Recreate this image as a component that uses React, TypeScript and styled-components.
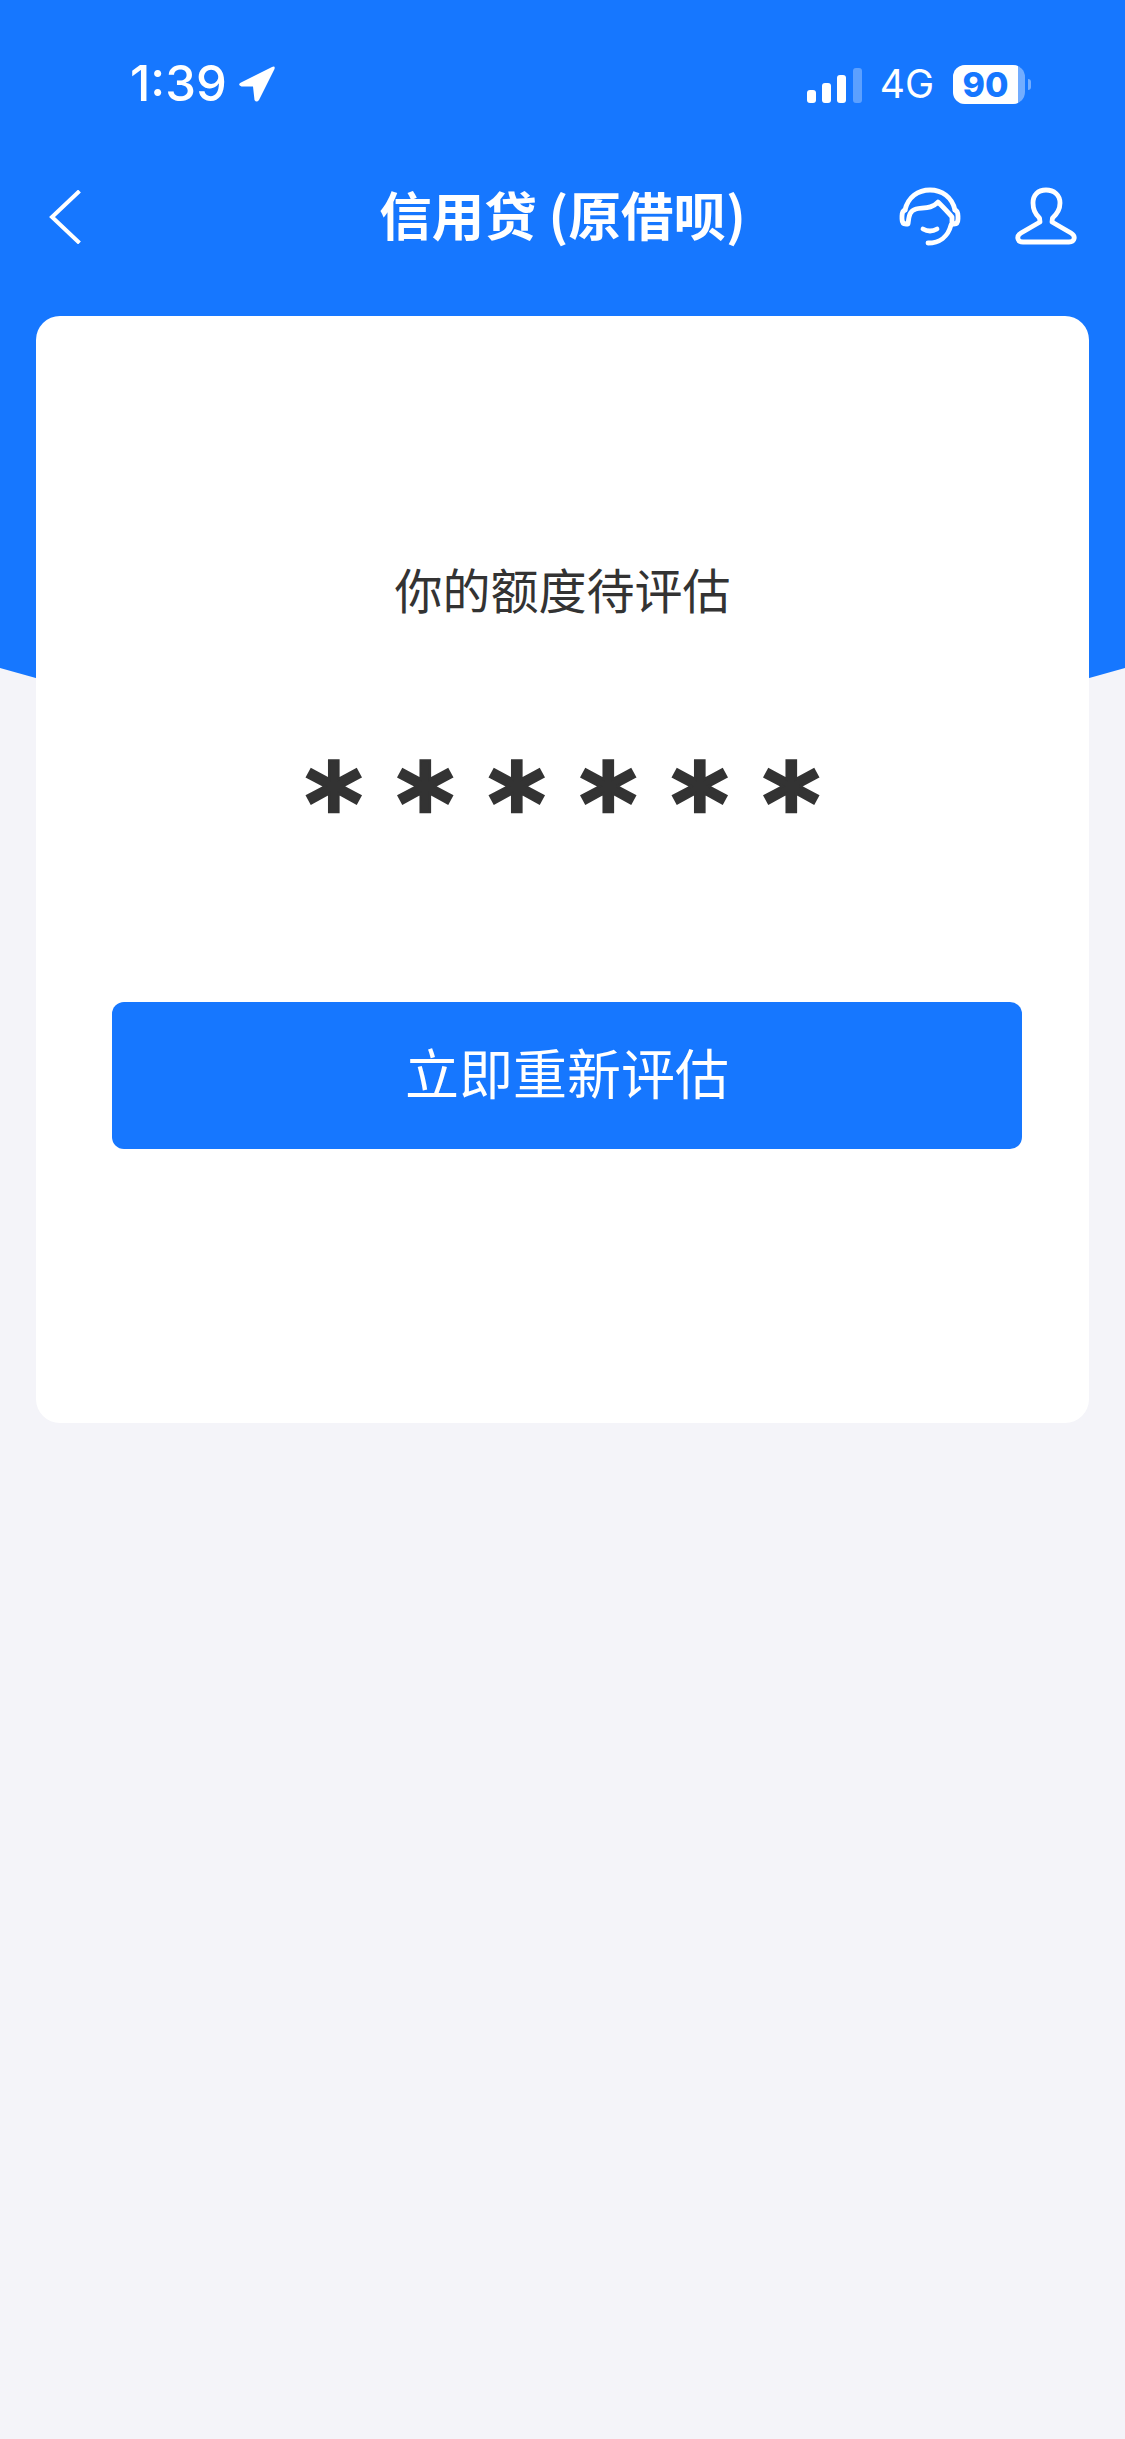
import styled, { createGlobalStyle } from "styled-components";

const BLUE = "#1677ff";

const GlobalStyle = createGlobalStyle`
  html, body {
    margin: 0;
    padding: 0;
    background: #f4f4f9;
  }
  * {
    box-sizing: border-box;
  }
`;

const Page = styled.div`
  position: relative;
  width: 1125px;
  height: 2439px;
  overflow: hidden;
  background: #f4f4f9;
  font-family: "Noto Sans CJK SC", "Noto Sans", sans-serif;
`;

const HeaderBackdrop = styled.div`
  position: absolute;
  top: 0;
  left: 0;
  width: 100%;
  height: 830px;
  background: ${BLUE};
  clip-path: polygon(0 0, 100% 0, 100% 668px, 50% 825px, 0 668px);
`;

const Content = styled.div`
  position: relative;
  display: flex;
  flex-direction: column;
`;

const StatusBar = styled.div`
  display: flex;
  justify-content: space-between;
  align-items: center;
  height: 40px;
  margin-top: 64px;
  padding: 0 94px 0 130px;
  color: #fff;
`;

const StatusLeft = styled.div`
  display: flex;
  align-items: center;
  gap: 11px;
`;

const Time = styled.span`
  font-family: Inter, sans-serif;
  font-size: 49px;
  font-weight: 500;
  line-height: 40px;
`;

const StatusRight = styled.div`
  display: flex;
  align-items: center;
`;

const Signal = styled.div`
  display: flex;
  align-items: flex-end;
  gap: 6.3px;
  height: 35px;
  margin-top: 2px;
`;

const SignalBar = styled.span<{ $h: number; $off?: boolean }>`
  display: block;
  width: 9px;
  height: ${(p) => p.$h}px;
  border-radius: 3px;
  background: ${(p) => (p.$off ? "rgba(255, 255, 255, 0.3)" : "#fff")};
`;

const Network = styled.span`
  margin-left: 18px;
  font-family: Inter, sans-serif;
  font-size: 39px;
  font-weight: 400;
  line-height: 40px;
`;

const Battery = styled.div`
  position: relative;
  width: 72px;
  height: 39px;
  margin-left: 19px;
  border-radius: 12px;
  overflow: hidden;
  background: rgba(255, 255, 255, 0.4);
  display: flex;
`;

const BatteryFill = styled.div`
  flex: none;
  width: 65px;
  height: 100%;
  background: #fff;
  display: flex;
  justify-content: center;
  align-items: center;
  color: ${BLUE};
  font-family: Inter, sans-serif;
  font-size: 34px;
  font-weight: 800;
`;

const BatteryTip = styled.span`
  width: 3px;
  height: 11px;
  margin-left: 3px;
  border-radius: 0 3px 3px 0;
  background: rgba(255, 255, 255, 0.4);
`;

const NavBar = styled.div`
  position: relative;
  display: flex;
  align-items: center;
  height: 60px;
  margin-top: 83px;
  padding: 0 50px 0 49px;
  color: #fff;
`;

const BackIcon = styled.svg`
  display: block;
  width: 32px;
  height: 54px;
  fill: none;
  stroke: #fff;
  stroke-width: 4;
`;

const Title = styled.h1`
  position: absolute;
  left: 0;
  right: 0;
  top: 0;
  margin: 0;
  text-align: center;
  font-size: 52.5px;
  font-weight: 700;
  line-height: 52px;
`;

const NavActions = styled.div`
  display: flex;
  align-items: center;
  gap: 55px;
  margin-left: auto;
`;

const NavIcon = styled.svg`
  display: block;
  width: 80px;
  height: 70px;
  margin: -4px -10px 0;
  fill: none;
  stroke: #fff;
  stroke-width: 4.8;
  stroke-linecap: round;
  stroke-linejoin: round;
`;

const Card = styled.section`
  display: flex;
  flex-direction: column;
  align-items: center;
  width: 1053px;
  height: 1107px;
  margin: 69px 0 0 36px;
  padding-top: 237px;
  border-radius: 24px;
  background: #fff;
`;

const QuotaLabel = styled.div`
  font-size: 48px;
  font-weight: 400;
  line-height: 70px;
  color: #333;
`;

const QuotaStars = styled.div`
  margin-top: 127px;
  font-family: "DejaVu Sans", sans-serif;
  font-size: 110px;
  font-weight: 700;
  line-height: 110px;
  letter-spacing: 34px;
  text-indent: 34px;
  color: #333;
  -webkit-text-stroke: 2.5px #333;
`;

const ReassessButton = styled.button`
  align-self: stretch;
  height: 147px;
  margin: 142px 67px 0 76px;
  padding: 0 0 8px;
  border: 0;
  border-radius: 12px;
  background: ${BLUE};
  color: #fff;
  font-family: inherit;
  font-size: 54px;
  font-weight: 400;
`;

export default function App() {
  return (
    <Page>
      <GlobalStyle />
      <HeaderBackdrop />
      <Content>
        <StatusBar>
          <StatusLeft>
            <Time>1:39</Time>
            <svg width="38" height="38" viewBox="0 0 38 38">
              <path
                d="M3 17.5 L34 2 Q37.5 0.5 36.5 4 L21 35 Q18.5 38 16.5 35 L15 21.5 L3.5 21.5 Q-1 19.5 3 17.5 Z"
                fill="#fff"
              />
            </svg>
          </StatusLeft>
          <StatusRight>
            <Signal>
              <SignalBar $h={13} />
              <SignalBar $h={20} />
              <SignalBar $h={28} />
              <SignalBar $h={35} $off />
            </Signal>
            <Network>4G</Network>
            <Battery>
              <BatteryFill>90</BatteryFill>
            </Battery>
            <BatteryTip />
          </StatusRight>
        </StatusBar>
        <NavBar>
          <BackIcon viewBox="0 0 32 54">
            <path d="M30.5 1 L3 27 L30.5 53" />
          </BackIcon>
          <Title>信用贷 (原借呗)</Title>
          <NavActions>
            <NavIcon viewBox="0 0 80 70">
              <path d="M15 30 C18 17 28 10 40 10 C52 10 62 17 65 30" />
              <path d="M15 30 Q12 31 12 36 L12 39 Q12 44 16 44 L18 44 C19 37 19 31 26 29 C33 27.5 42 29 48 22 C53 27 58 32 62 37 L62 44 L64 44 Q68 44 68 39 L68 36 Q68 31 65 30" />
              <path d="M33 49 Q40 53 47 49" />
              <path d="M38 63 C49 63 58 57 61 45" />
            </NavIcon>
            <NavIcon viewBox="0 0 80 70">
              <path d="M35 42 L34.5 38 C30 34 28 29 28 23 C28 15 33 10 41 10 C49 10 55 15 55 23 C55 29 52 34 47.5 38 L47 42 L66 53 C71 56 70 62 64 62 L18 62 C12 62 11 56 16 53 Z" />
            </NavIcon>
          </NavActions>
        </NavBar>
        <Card>
          <QuotaLabel>你的额度待评估</QuotaLabel>
          <QuotaStars>******</QuotaStars>
          <ReassessButton>立即重新评估</ReassessButton>
        </Card>
      </Content>
    </Page>
  );
}
